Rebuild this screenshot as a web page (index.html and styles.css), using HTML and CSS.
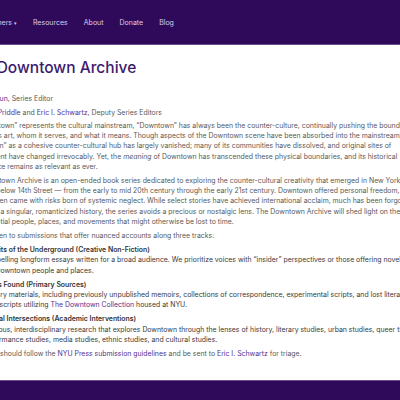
FILE: index.html
```html
<!DOCTYPE html>
<html>
<head>
    <title>The Downtown Archive</title>
    <meta charset="utf-8">
    <link rel="stylesheet" href="styles.css">
</head>
<body>
    <div class="nav">
        <div class="nav-links">
            <a href="#">Partners <span class="caret">&#9662;</span></a>
            <a href="#">Resources</a>
            <a href="#">About</a>
            <a href="#">Donate</a>
            <a href="#">Blog</a>
        </div>
    </div>

    <div class="content">
        <h1>The Downtown Archive</h1>

        <p class="editors"><a href="#">Ann Calhoun</a>, Series Editor</p>
        <p class="editors">Charlotte <a href="#">Priddle</a> and <a href="#">Eric I. Schwartz</a>, Deputy Series Editors</p>

        <p>While &ldquo;Uptown&rdquo; represents the cultural mainstream, &ldquo;Downtown&rdquo; has always been the counter-culture, continually pushing the boundaries of what<br>
            constitutes art, whom it serves, and what it means. Though aspects of the Downtown scene have been absorbed into the mainstream,<br>
            &ldquo;Downtown&rdquo; as a cohesive counter-cultural hub has largely vanished; many of its communities have dissolved, and original sites of<br>
            engagement have changed irrevocably. Yet, the <em>meaning</em> of Downtown has transcended these physical boundaries, and its historical<br>
            significance remains as relevant as ever.</p>

        <p>The Downtown Archive is an open-ended book series dedicated to exploring the counter-cultural creativity that emerged in New York<br>
            City, just below 14th Street &mdash; from the early to mid 20th century through the early 21st century. Downtown offered personal freedom,<br>
            but too often came with risks born of systemic neglect. While select stories have achieved international acclaim, much has been forgotten.<br>
            Instead of a singular, romanticized history, the series avoids a precious or nostalgic lens. The Downtown Archive will shed light on the work of<br>
            the influential people, places, and movements that might otherwise be lost to time.</p>

        <p>We are open to submissions that offer nuanced accounts along three tracks:</p>

        <div class="track">
            <h3>Portraits of the Underground (Creative Non-Fiction)</h3>
            <p>Compelling longform essays written for a broad audience. We prioritize voices with &ldquo;insider&rdquo; perspectives or those offering novel insights<br>
                into Downtown people and places.</p>
        </div>

        <div class="track">
            <h3>Papers Found (Primary Sources)</h3>
            <p>Primary materials, including previously unpublished memoirs, collections of correspondence, experimental scripts, and lost literary<br>
                manuscripts utilizing <a href="#">The Downtown Collection</a> housed at NYU.</p>
        </div>

        <div class="track">
            <h3>Cultural Intersections (Academic Interventions)</h3>
            <p>Rigorous, interdisciplinary research that explores Downtown through the lenses of history, literary studies, urban studies, queer theory,<br>
                performance studies, media studies, ethnic studies, and cultural studies.</p>
        </div>

        <p>Proposals should follow the <a href="#">NYU Press submission guidelines</a> and be sent to <a href="#">Eric I. Schwartz</a> for triage.</p>
    </div>

    <div class="footer"></div>
</body>
</html>
```

FILE: styles.css
```css
body {
    font-family: Inter, "Noto Sans", sans-serif;
    background-color: white;
    margin: 0;
    padding: 0;
    overflow: hidden;
}

a {
    color: #57308f;
    text-decoration: none;
}

.nav {
    background-color: #2f0a5a;
    height: 44px;
    border-bottom: 1px solid #6a4d8c;
    display: flex;
    align-items: center;
}

.nav-links {
    display: flex;
    gap: 16px;
    margin-left: -16px;
    margin-top: 1px;
}

.nav-links a {
    color: #d9cdeb;
    font-size: 7px;
}

.caret {
    font-size: 5px;
}

.content {
    box-sizing: border-box;
    margin-left: -34px;
    width: 700px;
    height: 335px;
    padding-top: 13px;
}

h1 {
    margin: 0 0 17px -2px;
    font-size: 15.5px;
    line-height: 19px;
    font-weight: 500;
    color: #3d1a6e;
}

p {
    margin: 0 0 4px 0;
    font-size: 6.9px;
    line-height: 10.2px;
    color: #595959;
    white-space: nowrap;
}

.editors {
    margin-bottom: 3.3px;
}

em {
    font-style: italic;
}

.track {
    margin-bottom: 4px;
    padding-left: 12.5px;
}

.track h3 {
    margin: 0;
    font-size: 6.9px;
    line-height: 10.2px;
    font-weight: 600;
    color: #333;
}

.track p {
    margin: 0 0 0 3px;
    color: #3a3a3a;
}

.footer {
    background-color: #2f0a5a;
    border-top: 1px solid #6a4d8c;
    height: 40px;
}
```
